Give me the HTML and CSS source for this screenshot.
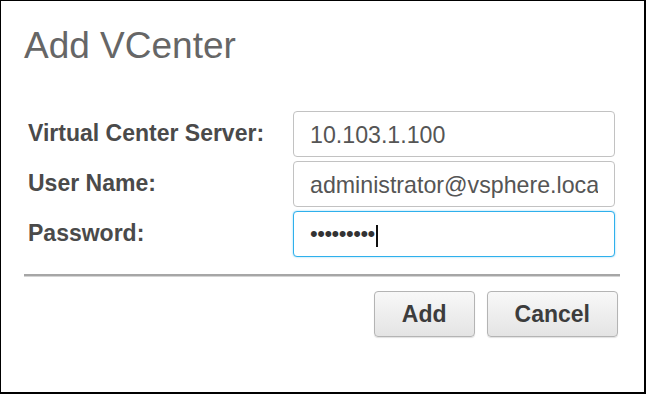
FILE: index.html
```html
<!DOCTYPE html>
<html lang="en">
<head>
<meta charset="utf-8">
<title>Add VCenter</title>
<link rel="stylesheet" href="styles.css">
</head>
<body>
<div class="dialog">
  <h1 class="title">Add VCenter</h1>
  <form class="form">
    <label class="label" for="server">Virtual Center Server:</label>
    <input class="field" id="server" type="text" value="10.103.1.100">
    <label class="label" for="user">User Name:</label>
    <input class="field" id="user" type="text" value="administrator@vsphere.local">
    <label class="label" for="pass">Password:</label>
    <div class="field field-focus" id="pass"><span class="dots">•••••••••</span><span class="caret"></span></div>
  </form>
  <div class="separator"></div>
  <div class="actions">
    <button class="btn" type="button">Add</button>
    <button class="btn" type="button">Cancel</button>
  </div>
</div>
</body>
</html>
```
FILE: styles.css
```css
html, body {
  margin: 0;
  padding: 0;
  background: #ffffff;
}
.dialog {
  box-sizing: border-box;
  width: 646px;
  height: 394px;
  border-top: 1px solid #000;
  border-left: 1px solid #000;
  border-right: 2px solid #000;
  border-bottom: 2px solid #000;
  padding: 0 24px 0 23px;
  font-family: "Liberation Sans", Arial, sans-serif;
  background: #fff;
}
.title {
  margin: 26px 0 0 0;
  font-size: 37px;
  line-height: 37px;
  font-weight: normal;
  color: #666666;
}
.form {
  margin: 47px 5px 0 4px;
  display: grid;
  grid-template-columns: 265px 1fr;
  grid-auto-rows: 46px;
  row-gap: 4px;
  align-items: center;
}
.label {
  font-size: 23px;
  font-weight: bold;
  color: #4a4a4a;
  line-height: 46px;
  margin-top: -2px;
}
.field {
  box-sizing: border-box;
  height: 46px;
  width: 100%;
  border: 1px solid #c2c2c2;
  border-radius: 4px;
  padding: 3px 16px 0 16px;
  font-family: "Liberation Sans", Arial, sans-serif;
  font-size: 23.2px;
  color: #555555;
  background: #fff;
  outline: none;
  margin: 0;
}
.field-focus {
  display: flex;
  align-items: center;
  border: 1px solid #2fb0ec;
  box-shadow: 0 0 2px rgba(47, 176, 236, 0.6);
  padding-top: 0;
}
.dots {
  font-size: 22px;
  color: #333;
  letter-spacing: -0.5px;
}
.caret {
  display: inline-block;
  width: 2px;
  height: 22px;
  background: #111;
  margin-left: 1px;
  margin-top: 4px;
}
.separator {
  margin-top: 17px;
  height: 2px;
  background: #a6a6a6;
  border-bottom: 1px solid #d4d4d4;
}
.actions {
  margin-top: 14px;
  display: flex;
  justify-content: flex-end;
  gap: 12px;
  padding-right: 2px;
}
.btn {
  box-sizing: border-box;
  height: 46px;
  padding: 0 27px;
  border: 1px solid #b4b4b4;
  border-radius: 4px;
  background: linear-gradient(#f8f8f8, #e4e4e4);
  font-family: "Liberation Sans", Arial, sans-serif;
  font-size: 23px;
  font-weight: bold;
  color: #3c3c3c;
  box-shadow: 0 1px 1px rgba(0, 0, 0, 0.12);
}
```
